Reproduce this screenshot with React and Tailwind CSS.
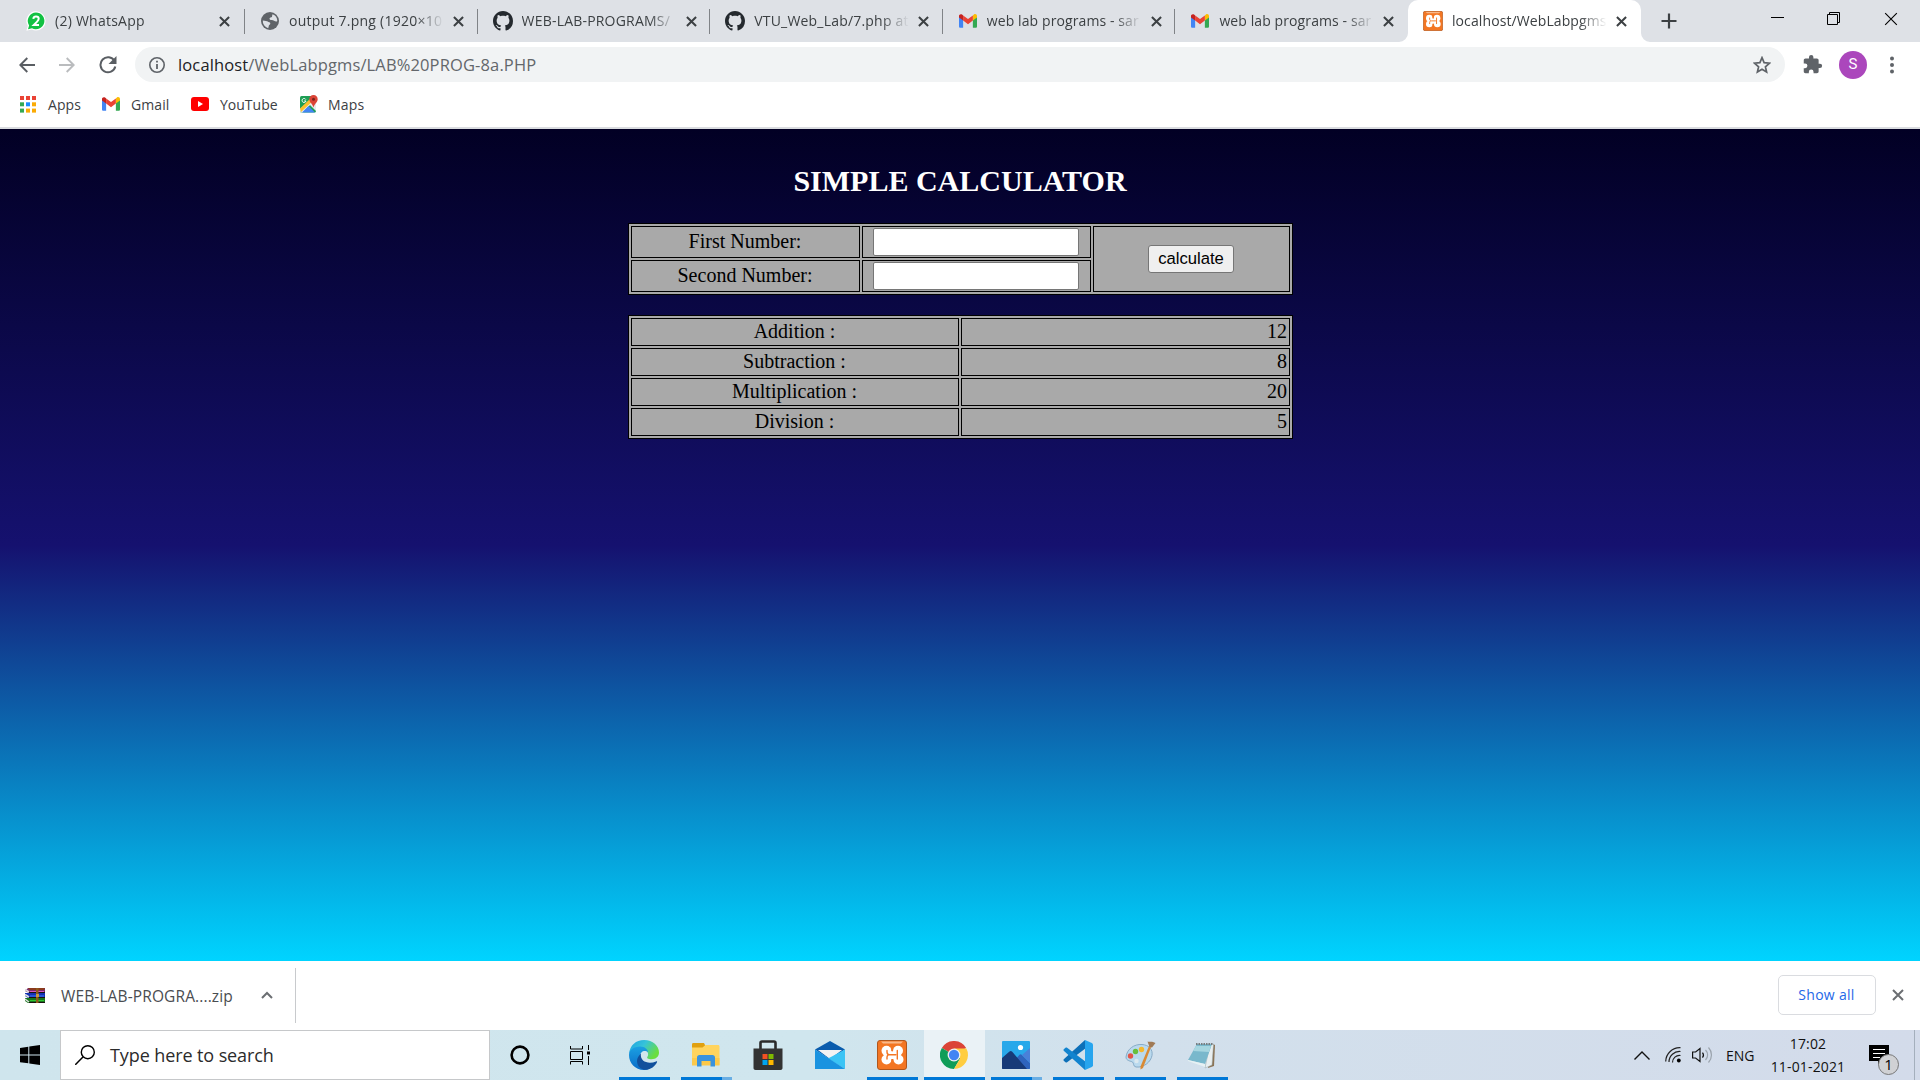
import React from "react";

const ui = "font-['Open_Sans','Noto_Sans',sans-serif]";

function Gmail({ className }) {
  return (
    <svg className={className} viewBox="0 0 20 15">
      <path d="M0 2v11.6c0 .8.6 1.4 1.4 1.4h3.2V5.5Z" fill="#4285f4" />
      <path d="M20 2v11.6c0 .8-.6 1.4-1.4 1.4h-3.2V5.5Z" fill="#34a853" />
      <path d="M15.4 1.3V7L20 3.6V2c0-1.9-2-2.8-3.4-1.7Z" fill="#fbbc04" />
      <path d="M4.6 7V1.3L10 5.4l5.4-4.1V7L10 11Z" fill="#ea4335" />
      <path d="M0 2v1.6L4.6 7V1.3L3.4.4C1.900-.7 0 .2 0 2Z" fill="#c5221f" />
    </svg>
  );
}

function Xampp({ className }) {
  return (
    <svg className={className} viewBox="0 0 30 30">
      <rect x="0.5" y="0.5" width="29" height="29" rx="2.500" fill="#f37623" stroke="#b0561c" />
      <path d="M4 1.500h22l-2 2H6Z" fill="#f9b98a" />
      <g fill="#fff">
        <circle cx="9.500" cy="10.800" r="5" />
        <circle cx="21" cy="10.800" r="5" />
        <circle cx="9.500" cy="19.500" r="5" />
        <circle cx="21.500" cy="19.500" r="5" />
        <path d="M7 11h16v8H7Z" />
      </g>
      <path d="M15.200 6v4.500M15.200 24.500V20" stroke="#f37623" strokeWidth="1.800" strokeLinecap="round" fill="none" />
      <path d="M10 10.500v1.500c0 1.800 1 2.800 2.500 2.800h6.300M20.300 10.500v8.500M10 19v-1.800c0-.8.3-1.400.8-1.800" fill="none" stroke="#f37623" strokeWidth="1.400" strokeLinecap="round" />
    </svg>
  );
}

function Github() {
  return (
    <svg className="h-5 w-5" viewBox="0 0 16 16">
      <path
        fill="#24292e"
        d="M8 0C3.580 0 0 3.580 0 8c0 3.540 2.290 6.530 5.470 7.590.4.070.55-.17.55-.38 0-.19-.01-.82-.01-1.490-2.010.37-2.530-.49-2.690-.94-.09-.23-.48-.94-.82-1.130-.28-.15-.68-.52-.01-.53.63-.01 1.080.58 1.230.82.72 1.210 1.870.87 2.330.66.07-.52.28-.87.51-1.070-1.780-.2-3.640-.89-3.640-3.950 0-.87.31-1.590.82-2.150-.08-.2-.36-1.020.08-2.120 0 0 .67-.21 2.200.82.64-.18 1.320-.27 2-.27s1.360.09 2 .27c1.530-1.040 2.200-.82 2.200-.82.44 1.100.16 1.920.08 2.120.51.56.82 1.270.82 2.150 0 3.070-1.870 3.750-3.650 3.950.29.25.54.73.54 1.480 0 1.070-.01 1.930-.01 2.200 0 .21.15.46.55.38A8.010 8.010 0 0 0 16 8c0-4.420-3.580-8-8-8Z"
      />
    </svg>
  );
}

function WhatsApp() {
  return (
    <svg className="h-5 w-5" viewBox="0 0 20 20">
      <path d="M10 .3a9.600 9.600 0 0 1 0 19.300c-1.500 0-3-.4-4.300-1.100L.4 19.800l1.400-5A9.600 9.600 0 0 1 10 .3Z" fill="#fff" />
      <path d="M10 1.500a8.400 8.400 0 1 1-4 15.800L2 18.300l1.100-3.900A8.400 8.400 0 0 1 10 1.500Z" fill="#12c143" />
      <path d="M7.300 7.800C7.500 6.300 8.500 5.500 10 5.500c1.600 0 2.700.9 2.700 2.300 0 1.200-.6 1.900-1.800 3.100L7.800 14h5.200" fill="none" stroke="#fff" strokeWidth="2" />
    </svg>
  );
}

function Globe() {
  return (
    <svg className="h-[18px] w-[18px]" viewBox="0 0 18 18">
      <circle cx="9" cy="9" r="9" fill="#5f6368" />
      <path d="M1.800 8.500 5 9c1.500 0 2 1 3.400 1.200 1.200.2 1.200 2 .1 2.600-1 .6-.6 2-1.300 3.400A7.300 7.300 0 0 1 1.800 8.500ZM11.500 2.200A7.300 7.300 0 0 1 16.300 9c-.9 1-2.300.4-3.200-.3-1.300-1-3.400 0-4.300-1.200-.9-1.300.4-1.900 1.500-2.200 1.400-.3.500-2 1.200-3.100Z" fill="#dee1e6" />
    </svg>
  );
}

function Cross({ className, stroke = "#3c4043", w = 2.2 }) {
  return (
    <svg className={className} viewBox="0 0 12 12">
      <path d="M1 1l10 10M11 1L1 11" stroke={stroke} strokeWidth={w} fill="none" />
    </svg>
  );
}

function Tab({ icon, title, active, first, divider, track = "" }) {
  return (
    <div className={`relative flex h-[42px] shrink-0 items-center ${first ? "w-[234px] pl-[15px]" : "w-[232.6px] pl-[15px]"} ${active ? "rounded-t-[10px] bg-white" : ""}`}>
      <div className="flex w-5 shrink-0 justify-center">{icon}</div>
      <div className={`ml-[9px] w-[155px] shrink-0 overflow-hidden whitespace-nowrap text-[14px] leading-[22px] text-[#3c4043] [mask-image:linear-gradient(to_right,black_82%,transparent_100%)] ${track}`}>
        {title}
      </div>
      <Cross className="ml-[9px] h-[11px] w-[11px]" />
      {divider && <div className="absolute right-0 top-[9px] h-[25px] w-px bg-[#808387]" />}
      {active && (
        <>
          <svg className="absolute -left-[9px] bottom-0 h-[9px] w-[9px]" viewBox="0 0 9 9">
            <path d="M9 0v9H0A9 9 0 0 0 9 0Z" fill="#fff" />
          </svg>
          <svg className="absolute -right-[9px] bottom-0 h-[9px] w-[9px]" viewBox="0 0 9 9">
            <path d="M0 0v9h9A9 9 0 0 1 0 0Z" fill="#fff" />
          </svg>
        </>
      )}
    </div>
  );
}

function TabStrip() {
  return (
    <div className="flex h-[42px] items-start bg-[#dee1e6] pl-[11px]">
      <Tab first divider icon={<WhatsApp />} title="(2) WhatsApp" track="tracking-[0.25px]" />
      <Tab divider icon={<Globe />} title="output 7.png (1920×10" track="tracking-[0.25px]" />
      <Tab divider icon={<Github />} title="WEB-LAB-PROGRAMS/" track="tracking-[0.2px]" />
      <Tab divider icon={<Github />} title="VTU_Web_Lab/7.php at" track="tracking-[0.2px]" />
      <Tab divider icon={<Gmail className="h-[14px] w-[18px]" />} title="web lab programs - sar" track="tracking-[0.1px]" />
      <Tab icon={<Gmail className="h-[14px] w-[18px]" />} title="web lab programs - sar" track="tracking-[0.1px]" />
      <Tab active icon={<Xampp className="h-5 w-5" />} title="localhost/WebLabpgms" track="tracking-[0.1px]" />
      <svg className="ml-[20px] mt-[13px] h-4 w-4" viewBox="0 0 16 16">
        <path d="M8 .5v15M.5 8h15" stroke="#3c4043" strokeWidth="2.200" />
      </svg>
      <div className="ml-auto mr-[22px] flex h-[37px] items-center">
        <svg className="h-[13px] w-[13px]" viewBox="0 0 13 13">
          <path d="M0 5.500h13" stroke="#000" />
        </svg>
        <svg className="ml-[43px] h-[13px] w-[13px]" viewBox="0 0 13 13">
          <path d="M.5 2.500h10v10H.5ZM2.500 2.500v-2h10v10h-2" stroke="#000" fill="none" />
        </svg>
        <Cross className="ml-[44px] h-[14px] w-[14px]" stroke="#000" w={0.95} />
      </div>
    </div>
  );
}

function Toolbar() {
  return (
    <div className="flex h-[45px] items-center bg-white pl-[19px]">
      <svg className="h-4 w-4" viewBox="0 0 16 16">
        <path d="M16 8H1.500M8.300 1 1.300 8l7 7" stroke="#5a5e63" strokeWidth="1.900" fill="none" />
      </svg>
      <svg className="ml-[24px] h-4 w-4" viewBox="0 0 16 16">
        <path d="M0 8h14.500M7.700 1l7 7-7 7" stroke="#babcbe" strokeWidth="1.900" fill="none" />
      </svg>
      <svg className="ml-[24px] h-[18px] w-[18px]" viewBox="0 0 18 18">
        <path d="M15.500 5A7.500 7.500 0 1 0 16.300 10.500" stroke="#5a5e63" strokeWidth="2" fill="none" />
        <path d="M17.500 0v8h-8Z" fill="#5a5e63" />
      </svg>
      <div className="ml-[18px] flex h-[35px] w-[1650px] items-center rounded-full bg-[#f1f3f4] pl-[14px] pr-[14px]">
        <svg className="h-4 w-4" viewBox="0 0 16 16">
          <circle cx="8" cy="8" r="7.200" fill="none" stroke="#5f6368" strokeWidth="1.600" />
          <path d="M8 7v5M8 3.800v1.800" stroke="#5f6368" strokeWidth="1.800" />
        </svg>
        <div className="ml-[13px] whitespace-nowrap text-[16.5px] leading-6 tracking-[0.13px] text-[#63676b]">
          <span className="text-[#202124]">localhost</span>/WebLabpgms/LAB%20PROG-8a.PHP
        </div>
        <svg className="ml-auto h-[18px] w-[18px]" viewBox="0 0 18 18">
          <path d="m9 1.700 2.100 5 5.400.5-4.100 3.600 1.200 5.300L9 13.300l-4.600 2.800 1.200-5.300-4.100-3.600 5.400-.5Z" fill="none" stroke="#5f6368" strokeWidth="1.700" />
        </svg>
      </div>
      <svg className="ml-[17px] h-[21px] w-[21px]" viewBox="0 0 24 24">
        <path fill="#5f6368" d="M20.500 11H19V7c0-1.100-.9-2-2-2h-4V3.500a2.500 2.500 0 0 0-5 0V5H4c-1.100 0-2 .9-2 2v3.800h1.500a2.700 2.700 0 0 1 0 5.400H2V20c0 1.100.9 2 2 2h3.800v-1.500a2.700 2.700 0 0 1 5.400 0V22H17c1.100 0 2-.9 2-2v-4h1.500a2.500 2.500 0 0 0 0-5Z" />
      </svg>
      <div className="ml-4 flex h-7 w-7 items-center justify-center rounded-full bg-[#ab47bc] font-['Roboto',sans-serif] text-[15px] text-white">S</div>
      <svg className="ml-[23px] h-[18px] w-1" viewBox="0 0 4 18">
        <circle cx="2" cy="2.500" r="2" fill="#5f6368" />
        <circle cx="2" cy="9" r="2" fill="#5f6368" />
        <circle cx="2" cy="15.500" r="2" fill="#5f6368" />
      </svg>
    </div>
  );
}

const dots = ["#ea4335", "#ea4335", "#ea4335", "#34a853", "#1a8cff", "#fbab04", "#34a853", "#fbab04", "#fbab04"];

function Bookmarks() {
  return (
    <div className="flex h-[42px] items-center border-b-2 border-[#dadce0] bg-white pb-[6px] pl-5 text-[14px] text-[#3c4043]">
      <svg className="h-[17px] w-4" viewBox="0 0 16 17">
        {dots.map((c, i) => (
          <rect key={i} x={(i % 3) * 6} y={Math.floor(i / 3) * 6.300} width="4" height="4" fill={c} />
        ))}
      </svg>
      <div className="ml-3 w-[54px] tracking-[0.1px]">Apps</div>
      <Gmail className="h-[14px] w-[18px]" />
      <div className="ml-[11px] w-[60px] tracking-[0.1px]">Gmail</div>
      <svg className="h-[14px] w-[18px]" viewBox="0 0 18 14">
        <rect width="18" height="14" rx="3" fill="#f00" />
        <path d="M7 4v6l5-3Z" fill="#fff" />
      </svg>
      <div className="ml-[11px] w-[80px]">YouTube</div>
      <svg className="h-[18px] w-[18px]" viewBox="0 0 18 18">
        <rect y="1" width="16" height="16.500" rx="1.500" fill="#1e9e55" />
        <path d="M0 14 13 2.500 16 6v10L10 10 3 17.500H1.500A1.500 1.500 0 0 1 0 16Z" fill="#e8eaed" />
        <path d="M0 13.500 12.500 1.500 15 4 1 17Z" fill="#fbc02d" />
        <path d="M2 17.500 8.500 11l6.500 6.500Z" fill="#4285f4" />
        <path d="M13.500 0C11 0 9.300 1.800 9.300 4.200c0 3 3.200 4.300 4.200 8.300 1-4 4.200-5.300 4.200-8.300C17.700 1.800 16 0 13.500 0Z" fill="#db4437" />
        <circle cx="13.500" cy="4.200" r="1.500" fill="#7b231b" />
        <path d="M5.800 4.500A2 2 0 1 0 6 6H4.200" stroke="#fff" strokeWidth="1" fill="none" />
      </svg>
      <div className="ml-[10px] tracking-[0.2px]">Maps</div>
    </div>
  );
}

const cell = "flex items-center justify-center border border-black";
const label = `${cell} pb-px pr-px`;
const field = "mr-px h-7 w-[206px] rounded-[2px] border border-[#767676] bg-white outline-none";

const results = [
  ["Addition :", "12"],
  ["Subtraction :", "8"],
  ["Multiplication :", "20"],
  ["Division :", "5"],
];

function Page() {
  return (
    <div className="flex h-[832px] flex-col items-start bg-[linear-gradient(180deg,#020024_0%,#15116f_50%,#00d4ff_100%)] pl-[628px] font-['Liberation_Serif',serif] text-[20px] leading-[23px] text-black">
      <h1 className="mt-[35px] h-[34px] w-[664px] text-center text-[30px] font-bold leading-[34px] text-white">SIMPLE CALCULATOR</h1>
      <div className="mt-[25px] grid h-[72px] w-[665px] grid-cols-[229px_229px_197px] grid-rows-[32px_32px] gap-0.5 border border-black bg-[#a9a9a9] p-0.5">
        <div className={label}>First Number:</div>
        <div className={cell}><input className={field} /></div>
        <div className={`${cell} row-span-2`}>
          <button className="mr-px h-7 w-[86px] rounded-[3px] border border-[#767676] bg-[#efefef] font-['Liberation_Sans',sans-serif] text-[16.667px] leading-5">calculate</button>
        </div>
        <div className={label}>Second Number:</div>
        <div className={cell}><input className={field} /></div>
      </div>
      <div className="mt-5 grid h-[124px] w-[665px] grid-cols-[328px_329px] grid-rows-[28px_28px_28px_28px] gap-0.5 border border-black bg-[#a9a9a9] p-0.5">
        {results.map(([name, value]) => (
          <React.Fragment key={name}>
            <div className={label}>{name}</div>
            <div className="flex items-center justify-end border border-black pb-px pr-[2px]">{value}</div>
          </React.Fragment>
        ))}
      </div>
    </div>
  );
}

function Downloads() {
  return (
    <div className="flex h-[69px] items-center bg-white">
      <svg className="ml-[25px] mb-px h-[15px] w-5" viewBox="0 0 20 15">
        <path d="M3 0h17v5H4L0 3Z" fill="#7b2a6b" />
        <path d="M3 0h17l-1 2H5Z" fill="#8b3a1c" />
        <path d="M0 5h20v5H3L0 8Z" fill="#1432b4" />
        <path d="M0 10h20v5H3L0 13Z" fill="#17751d" />
        <path d="M0 1.500 4 4M0 6.500 4 9M0 11 4 14" stroke="#ddd" strokeWidth="1.500" />
        <path d="M4 4.500h16M4 9.500h16M4 14.500h16" stroke="#1a1010" strokeWidth="1" />
        <path d="M5 3.500h14" stroke="#d65ac4" />
        <path d="M5 8h14" stroke="#3c78ff" />
        <path d="M5 12.500h14" stroke="#2fc72f" />
        <path d="M11 0h2.500v15H11Z" fill="#8d5a1a" />
        <path d="M11 6h3v3h-3Z" fill="#c99a3c" />
      </svg>
      <div className="ml-4 w-[200px] whitespace-nowrap text-[15.5px] leading-6 tracking-[0.12px] text-[#4a4d51]">WEB-LAB-PROGRA....zip</div>
      <svg className="mb-[1px] h-[8px] w-3" viewBox="0 0 12 8">
        <path d="m1 7 5-5 5 5" fill="none" stroke="#6b6e72" strokeWidth="2" />
      </svg>
      <div className="ml-[22px] h-[55px] w-px bg-[#c8cacd]" />
      <div className="ml-auto mb-px flex h-[40px] w-[98px] items-center justify-center rounded-[5px] border border-[#dadce0] pb-[2px] pr-px text-[14px] font-medium tracking-[0.3px] text-[#2468e8]">Show all</div>
      <Cross className="ml-4 mr-4 mb-px h-[12px] w-[12px]" stroke="#6b6e72" w={2} />
    </div>
  );
}

function TaskButton({ children, bar, split, active }) {
  return (
    <div className={`flex h-[50px] shrink-0 flex-col items-center ${active ? "w-[61px] mr-px bg-[#eaf2f6]" : "w-[62px] pr-px"}`}>
      <div className="flex h-[47px] items-center pr-px pt-[3px]">{children}</div>
      {bar && (
        <div className={`flex h-[3px] ${active ? "w-full" : "w-[51px]"} bg-[#0078d7]`}>
          {split && <div className="ml-auto h-full w-[10px] bg-[#69aee4]" />}
        </div>
      )}
    </div>
  );
}

function Edge() {
  return (
    <svg className="h-[30px] w-[30px]" viewBox="0 0 30 30">
      <defs>
        <linearGradient id="edgeTop" x1="0" y1="0" x2="1" y2="0.5">
          <stop offset="0" stopColor="#1ba0e2" />
          <stop offset="0.5" stopColor="#36c3da" />
          <stop offset="1" stopColor="#6ade3f" />
        </linearGradient>
        <linearGradient id="edgeLow" x1="0" y1="0" x2="0" y2="1">
          <stop offset="0" stopColor="#1ba0e2" />
          <stop offset="1" stopColor="#0a6cc8" />
        </linearGradient>
      </defs>
      <path d="M0 14C1 5 7 0 15 0c9 0 15 6 15 12.500 0 4-3 6.700-7.500 6.700-3.800 0-4.800-1.200-4.200-2.200 2.500-3.500-.5-8.500-6.300-8.500C6 8.500 1 11 0 14Z" fill="url(#edgeTop)" />
      <path d="M0 15c0-5 5-8.500 11-8.500 5 0 8 3 8 6-3-3-8-1-8 4 0 6 5 11 10 12-2 1-4 1.500-6 1.500C6 30 0 23 0 15Z" fill="url(#edgeLow)" />
      <path d="M12 13.500C9 16 8 19 8 21c0 5 4 9 9 8.800 5-.3 9-3.500 11-7.500.4-.8-.3-1.200-1-.9C20 24.500 10.500 22 12 13.500Z" fill="#11509c" />
    </svg>
  );
}

function Explorer() {
  return (
    <svg className="h-[24px] w-[28px]" viewBox="0 0 28 24">
      <path d="M0 1.500C0 .7.500 0 1.300 0H12l1 2v3H0Z" fill="#e0a010" />
      <path d="M0 4.500h10.500l3-2.500H26c1 0 1.500.6 1.500 1.500V22H0Z" fill="#ffd45e" />
      <path d="M0 15h27.500v7.500H0Z" fill="#fcc94a" />
      <path d="M5 23.500v-9C5 13 6 12 7.500 12h13c1.500 0 2.500 1 2.500 2.500v9h-4.500V18h-9v5.500Z" fill="#3a93de" />
    </svg>
  );
}

function Store() {
  return (
    <svg className="h-[30px] w-[30px]" viewBox="0 0 30 30">
      <path d="M7.500 9V3c0-1 .7-1.500 1.500-1.500h12c.8 0 1.500.5 1.500 1.500v6" fill="none" stroke="#2a2a2a" strokeWidth="2.600" />
      <path d="M.5 8.500h29V28c0 1.200-.8 2-2 2h-25c-1.200 0-2-.8-2-2Z" fill="#333" />
      <path d="M9.500 14h5v5h-5Z" fill="#f25022" />
      <path d="M15.500 14h5v5h-5Z" fill="#7fba00" />
      <path d="M9.500 20h5v5h-5Z" fill="#00a4ef" />
      <path d="M15.500 20h5v5h-5Z" fill="#ffb900" />
    </svg>
  );
}

function Mail() {
  return (
    <svg className="h-[28px] w-[30px]" viewBox="0 0 30 28">
      <path d="M0 8.500 15 0l15 8.500-15 10Z" fill="#0a5cad" />
      <path d="M3 9h24l-12 9Z" fill="#f3f3f3" />
      <path d="M30 8.500V28L13 17.500Z" fill="#3bc4f5" />
      <path d="M0 8.500 30 28H0Z" fill="#1a93e0" />
    </svg>
  );
}

function ChromeLogo() {
  return (
    <svg className="h-[28px] w-[28px]" viewBox="0 0 48 48">
      <path d="M24 24 3.200 12A24 24 0 0 1 44.800 12Z" fill="#db4437" />
      <path d="M24 24 3.200 12A24 24 0 0 0 24 48L34.500 30Z" fill="#0f9d58" />
      <path d="M24 13h21.300A24 24 0 0 1 24 48l10.500-18Z" fill="#ffcd40" />
      <path d="M24 13h-6l6 11Z" fill="#db4437" />
      <circle cx="24" cy="24" r="11" fill="#f1f1f1" />
      <circle cx="24" cy="24" r="8.800" fill="#4285f4" />
    </svg>
  );
}

function Photos() {
  return (
    <svg className="h-[28px] w-[28px]" viewBox="0 0 28 28">
      <rect width="28" height="28" rx="1" fill="#28a8ea" />
      <path d="m12 20 5.500-6.300c.6-.7 1.500-.7 2.100 0L28 22v5c0 .6-.4 1-1 1H12Z" fill="#2f64bd" />
      <path d="m20 14 8-7v15Z" fill="#4a80d8" />
      <path d="M0 17 7.500 10.500c.9-.8 1.700-.8 2.500 0L25 28H1c-.6 0-1-.4-1-1Z" fill="#173a78" />
      <circle cx="18.500" cy="6.500" r="2.600" fill="#fff" />
    </svg>
  );
}

function VSCode() {
  return (
    <svg className="h-[30px] w-[30px]" viewBox="0 0 30 30">
      <path d="M22 0 1 19c-.7.600-.7 1.300 0 2l1.500 1.300c.5.400 1.100.4 1.600 0L23 8Z" fill="#0d70b8" />
      <path d="M23 22 4.100 7.700c-.5-.4-1.100-.4-1.600 0L1 9c-.7.700-.7 1.400 0 2l21 19Z" fill="#1284cf" />
      <path d="m22 0 6.800 3c.8.400 1.200 1 1.200 1.800v20.400c0 .8-.4 1.400-1.200 1.800L22 30Z" fill="#27a5ee" />
    </svg>
  );
}

function Paint() {
  return (
    <svg className="h-[30px] w-[31px]" viewBox="0 0 31 30">
      <path d="M1 17C2 9 9 4 17 4.500c7 .5 11 5 10 11S19 28 11 27c-3-.4-2-4-3.500-5S1 21 1 17Z" fill="#b9d9ee" stroke="#87abc7" strokeWidth="1" />
      <circle cx="11.500" cy="21" r="2.200" fill="#dbe8ef" />
      <circle cx="5.500" cy="16" r="2.700" fill="#e25549" />
      <circle cx="10.500" cy="11.500" r="2.700" fill="#67bf3c" />
      <circle cx="16.500" cy="9.500" r="2.700" fill="#f5b82e" />
      <path d="m26 7-8 21-2.500 1.500v-3L24 6Z" fill="#d98a35" />
      <path d="M22.500 1.500c2 1 3-.5 5.500.5l2.500 1-3.500 4.500-2.500-.500Z" fill="#a07a55" />
    </svg>
  );
}

function Notepad() {
  return (
    <svg className="h-[28px] w-[30px]" viewBox="0 0 30 28">
      <path d="M26 3 28 4l-1 21-6 2Z" fill="#8b7355" />
      <path d="M23 3h3.500L25 24l-7 3Z" fill="#e9eff0" stroke="#96a9ad" strokeWidth=".5" />
      <path d="M10 3h15l-7 20-17-4Z" fill="#79b8cc" />
      <path d="M9 5h15l-2 6L6 10Z" fill="#a6d6e0" />
      <path d="m1 19 17 4v3L1 20Z" fill="#e6f1f3" />
      <path d="M9 3h17" stroke="#777d80" strokeWidth="2" strokeDasharray="1.500 1" />
    </svg>
  );
}

function Taskbar() {
  return (
    <div className="flex h-[50px] bg-[linear-gradient(to_right,#cfe5ed_0%,#d0e6ee_42%,#d2e0ec_60%,#d3dbea_100%)]">
      <div className="flex w-[60px] items-center justify-center">
        <svg className="h-5 w-5" viewBox="0 0 20 20">
          <path d="M0 3 8.300 1.700V9.500H0ZM9.300 1.500 20 0v9.500H9.300ZM0 10.500h8.300v7.800L0 17.200ZM9.300 10.500H20V20L9.300 18.500Z" fill="#000" />
        </svg>
      </div>
      <div className="flex w-[430px] items-center border border-[#c6c8ca] bg-white pl-[14px]">
        <svg className="h-5 w-5" viewBox="0 0 20 20">
          <circle cx="12.800" cy="7.200" r="6.500" fill="none" stroke="#000" strokeWidth="1.400" />
          <path d="m8.200 11.800-8 8" stroke="#000" strokeWidth="1.500" />
        </svg>
        <div className="ml-[15px] whitespace-nowrap text-[18px] leading-6 tracking-[-0.1px] text-[#2b2b2b]">Type here to search</div>
      </div>
      <div className="flex w-[60px] items-center justify-center">
        <svg className="h-5 w-5" viewBox="0 0 20 20">
          <circle cx="10" cy="10" r="8.400" fill="none" stroke="#000" strokeWidth="2.600" />
        </svg>
      </div>
      <div className="mr-1 flex w-[60px] items-center justify-center">
        <svg className="h-5 w-5" viewBox="0 0 20 20">
          <path d="M.5 1v3h12V1M.5 6.500h12v8H.5ZM.5 19.500v-3h12v3M18.500 0v5M18.500 11v9" fill="none" stroke="#000" />
          <path d="M17 6.500h3v3h-3Z" />
        </svg>
      </div>
      <TaskButton bar><Edge /></TaskButton>
      <TaskButton bar split><Explorer /></TaskButton>
      <TaskButton><Store /></TaskButton>
      <TaskButton><Mail /></TaskButton>
      <TaskButton bar><Xampp className="h-[30px] w-[30px]" /></TaskButton>
      <TaskButton bar active><ChromeLogo /></TaskButton>
      <TaskButton bar split><Photos /></TaskButton>
      <TaskButton bar><VSCode /></TaskButton>
      <TaskButton bar><Paint /></TaskButton>
      <TaskButton bar><Notepad /></TaskButton>
      <div className="ml-auto flex items-center">
        <svg className="h-[9px] w-4" viewBox="0 0 16 9">
          <path d="m.5 8.500 7.500-7.500 7.500 7.500" fill="none" stroke="#111" strokeWidth="1.400" />
        </svg>
        <svg className="ml-[15px] h-4 w-4" viewBox="0 0 16 16">
          <path d="M.7 14.500A14 14 0 0 1 15.500.7M4 15A10.500 10.500 0 0 1 15.500 4.500M7.500 15.500a7 7 0 0 1 8-7" fill="none" stroke="#222" strokeWidth="1.200" />
          <circle cx="13.800" cy="13.500" r="1.900" />
        </svg>
        <svg className="ml-[11px] h-[18px] w-[21px]" viewBox="0 0 21 18">
          <path d="M.6 6h3L8 2.500v13L3.600 12h-3Z" fill="none" stroke="#111" strokeWidth="1.200" />
          <path d="M10.500 6.500a4 4 0 0 1 0 5" fill="none" stroke="#111" strokeWidth="1.200" />
          <path d="M13.500 4a7 7 0 0 1 0 10M16.500 1.500a11 11 0 0 1 0 15" fill="none" stroke="#9aa3ac" strokeWidth="1.200" />
        </svg>
        <div className="ml-[13px] w-[29px] text-[14px] text-[#111]">ENG</div>
        <div className="ml-[14px] flex w-[78px] flex-col items-center whitespace-nowrap pb-px text-[14px] leading-[23px] tracking-[0.15px] text-[#111]">
          <div>17:02</div>
          <div>11-01-2021</div>
        </div>
        <div className="relative ml-[22px] h-[21px] w-5">
          <svg className="h-[20px] w-5" viewBox="0 0 20 20">
            <path d="M0 0h20v16H13L9 20v-4H0Z" />
            <path d="M4 4.500h12M4 8.500h12M4 12.500h7" stroke="#fff" strokeWidth="1.100" />
          </svg>
          <div className="absolute left-[9px] top-[9px] flex h-[21px] w-[21px] items-center justify-center rounded-full border border-[#777] bg-[#d0d1d4] text-[15px] leading-none text-black">1</div>
        </div>
        <div className="ml-[25px] mr-[5px] h-[50px] w-px bg-[#a4afbc]" />
      </div>
    </div>
  );
}

export default function App() {
  return (
    <div className={`h-[1080px] w-[1920px] overflow-hidden bg-white ${ui}`}>
      <TabStrip />
      <Toolbar />
      <Bookmarks />
      <Page />
      <Downloads />
      <Taskbar />
    </div>
  );
}
